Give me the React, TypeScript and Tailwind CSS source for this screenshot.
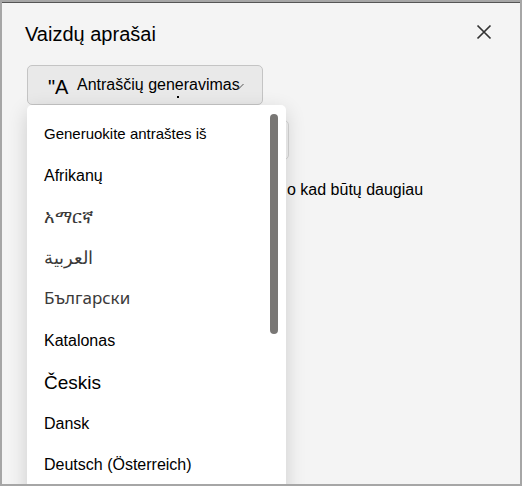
import { useState } from "react";
import { clsx } from "clsx";

type Language = { label: string; lang: string; style: string };

const plain = "text-[16px] text-black";
const native = "pb-[3px] text-[#3b3a39] font-['Noto_Sans','Open_Sans',sans-serif]";

const languages: Language[] = [
  { label: "Afrikanų", lang: "af", style: plain },
  { label: "አማርኛ", lang: "am", style: clsx(native, "text-[18px]") },
  { label: "العربية", lang: "ar", style: clsx(native, "text-[18px]") },
  { label: "Български", lang: "bg", style: clsx(native, "text-[17px]") },
  { label: "Katalonas", lang: "ca", style: plain },
  { label: "Českis", lang: "cs", style: "text-[19px] text-black" },
  { label: "Dansk", lang: "da", style: plain },
  { label: "Deutsch (Österreich)", lang: "de-AT", style: plain },
];

function LanguageMenu({ onPick }: { onPick: (lang: string) => void }) {
  return (
    <div className="absolute top-full left-0 z-10 flex h-[440px] w-[259px] items-start justify-between rounded-[5px] bg-white pt-[9px] pr-2 pl-[17px] shadow-[0_6px_20px_rgba(0,0,0,0.16)]">
      <ul className="grid h-[372px] auto-rows-fr">
        <li className="flex items-center text-[15px] whitespace-nowrap text-black">
          Generuokite antraštes iš
        </li>
        {languages.map(({ label, lang, style }) => (
          <li key={lang} className="flex">
            <button
              type="button"
              onClick={() => onPick(lang)}
              className={clsx("flex grow items-center leading-5 whitespace-nowrap", style)}
            >
              {label}
            </button>
          </li>
        ))}
      </ul>
      <div className="h-[220px] w-2 rounded-full bg-[#797775]" />
    </div>
  );
}

export default function App() {
  const [lang, setLang] = useState("");
  const [open, setOpen] = useState(true);

  return (
    <main className="h-screen overflow-hidden border-2 border-[#a6a6a6] bg-[#f4f4f4] font-['Liberation_Sans',Arial,sans-serif] text-black">
      <div className="h-full overflow-hidden border-t border-[#555555] pl-[25px]">
        <header className="flex h-[62px] items-center justify-between pr-[26px]">
          <h1 className="-ml-0.5 text-[20px]">Vaizdų aprašai</h1>
          <button type="button" aria-label="Uždaryti" className="pb-1">
            <svg width="20" height="20" viewBox="0 0 20 20" fill="none" stroke="#333" strokeWidth="1.7">
              <path d="M3.500 3.500 16.500 16.500M16.500 3.500 3.500 16.500" />
            </svg>
          </button>
        </header>

        <div className="relative w-[236px]">
          <button
            type="button"
            aria-expanded={open}
            onClick={() => setOpen(!open)}
            className="relative flex h-10 w-full items-center rounded-[5px] border border-[#c4c4c4] bg-[#e9e9e9] pl-5"
          >
            <span className="w-[29px] pt-1 text-left text-[20px]">"A</span>
            <span className="text-[16px] whitespace-nowrap">Antraščių generavimas</span>
            <span className="absolute top-[30px] left-[149px] size-0.5 bg-black" />
            <svg
              className="absolute top-[17px] right-[18px]"
              width="8"
              height="8"
              viewBox="0 0 8 8"
              fill="none"
              stroke="#555"
            >
              <path d="M.5 2.500 3 5.500 7.500 1" />
            </svg>
          </button>
          {open && <LanguageMenu onPick={setLang} />}
        </div>

        <input
          type="text"
          readOnly
          aria-label="Kalba"
          value={lang}
          className="mt-[15px] block h-10 w-[262px] rounded-[5px] border border-[#d6d6d6] bg-[#f4f4f4]"
        />
        <p className="mt-[18px] pl-[260px] text-[16px]">o kad būtų daugiau</p>
      </div>
    </main>
  );
}
